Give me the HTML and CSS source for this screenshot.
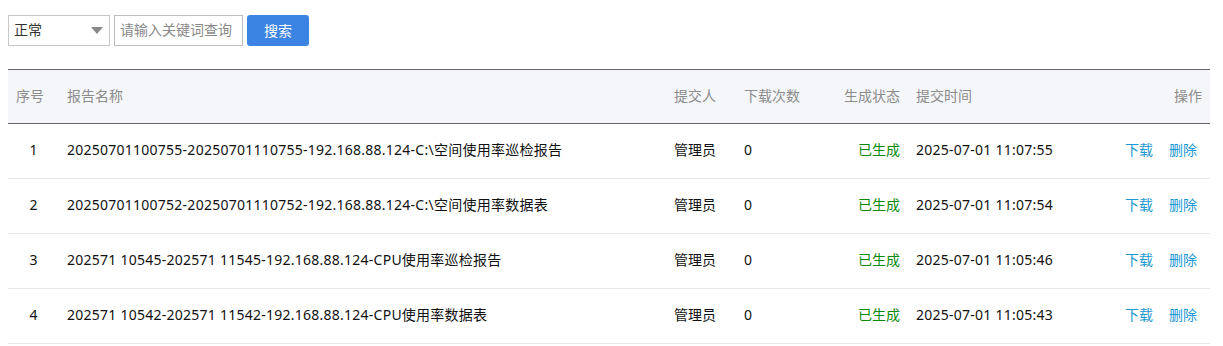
FILE: index.html
```html
<!DOCTYPE html>
<html lang="zh-CN">
<head>
<meta charset="utf-8">
<title>报告列表</title>
<link rel="stylesheet" href="styles.css">
</head>
<body>
<div class="page">
  <div class="toolbar">
    <div class="select">
      <span class="select-text">正常</span>
      <span class="select-arrow"></span>
    </div>
    <input class="search-input" type="text" placeholder="请输入关键词查询">
    <button class="search-btn">搜索</button>
  </div>

  <div class="table">
    <div class="row head">
      <div class="cell c-no">序号</div>
      <div class="cell c-name">报告名称</div>
      <div class="cell c-user">提交人</div>
      <div class="cell c-count">下载次数</div>
      <div class="cell c-status">生成状态</div>
      <div class="cell c-time">提交时间</div>
      <div class="cell c-ops">操作</div>
    </div>
    <div class="row body">
      <div class="cell c-no">1</div>
      <div class="cell c-name">20250701100755-20250701110755-192.168.88.124-C:\空间使用率巡检报告</div>
      <div class="cell c-user">管理员</div>
      <div class="cell c-count">0</div>
      <div class="cell c-status ok">已生成</div>
      <div class="cell c-time">2025-07-01 11:07:55</div>
      <div class="cell c-ops"><a class="op">下载</a><a class="op">删除</a></div>
    </div>
    <div class="row body">
      <div class="cell c-no">2</div>
      <div class="cell c-name">20250701100752-20250701110752-192.168.88.124-C:\空间使用率数据表</div>
      <div class="cell c-user">管理员</div>
      <div class="cell c-count">0</div>
      <div class="cell c-status ok">已生成</div>
      <div class="cell c-time">2025-07-01 11:07:54</div>
      <div class="cell c-ops"><a class="op">下载</a><a class="op">删除</a></div>
    </div>
    <div class="row body">
      <div class="cell c-no">3</div>
      <div class="cell c-name">202571 10545-202571 11545-192.168.88.124-CPU使用率巡检报告</div>
      <div class="cell c-user">管理员</div>
      <div class="cell c-count">0</div>
      <div class="cell c-status ok">已生成</div>
      <div class="cell c-time">2025-07-01 11:05:46</div>
      <div class="cell c-ops"><a class="op">下载</a><a class="op">删除</a></div>
    </div>
    <div class="row body">
      <div class="cell c-no">4</div>
      <div class="cell c-name">202571 10542-202571 11542-192.168.88.124-CPU使用率数据表</div>
      <div class="cell c-user">管理员</div>
      <div class="cell c-count">0</div>
      <div class="cell c-status ok">已生成</div>
      <div class="cell c-time">2025-07-01 11:05:43</div>
      <div class="cell c-ops"><a class="op">下载</a><a class="op">删除</a></div>
    </div>
  </div>
</div>
</body>
</html>
```

FILE: styles.css
```css
* { box-sizing: border-box; }
html, body {
  margin: 0;
  padding: 0;
  background: #fff;
}
body {
  font-family: "Noto Sans", "Noto Sans CJK SC", sans-serif;
  font-size: 14px;
  color: #111;
}
.page {
  padding: 15px 13px 0 8px;
}
.toolbar {
  display: flex;
  align-items: center;
  gap: 4px;
  height: 31px;
}
.select {
  width: 102px;
  height: 31px;
  border: 1px solid #c8c8c8;
  display: flex;
  align-items: center;
  justify-content: space-between;
  padding: 0 5px 2px 5px;
  background: #fff;
}
.select-text {
  font-size: 14px;
  color: #333;
  line-height: 20px;
}
.select-arrow {
  width: 0;
  height: 0;
  border-left: 6px solid transparent;
  border-right: 6px solid transparent;
  border-top: 7px solid #888;
  margin-right: 1px;
  margin-top: 2px;
}
.search-input {
  width: 129px;
  height: 31px;
  border: 1px solid #bdbdbd;
  padding: 0 5px 2px 5px;
  font-family: inherit;
  font-size: 14px;
  color: #333;
  outline: none;
}
.search-input::placeholder {
  color: #8a8a8a;
}
.search-btn {
  width: 62px;
  height: 31px;
  border: none;
  border-radius: 3px;
  background: #3c84e4;
  color: #fff;
  font-family: inherit;
  font-size: 14px;
  padding: 0 0 2px 0;
}
.table {
  margin-top: 23px;
  width: 1202px;
}
.row {
  display: grid;
  grid-template-columns: 51px 607px 70px 84px 88px 192px 110px;
  align-items: center;
}
.head {
  height: 55px;
  background: #f5f6f9;
  border-top: 1px solid #666;
  border-bottom: 1px solid #666;
  color: #8c8c8c;
}
.head .cell {
  padding-bottom: 1px;
}
.body {
  height: 55px;
  border-bottom: 1px solid #e8e8e8;
}
.cell {
  padding: 0 8px 3px 8px;
  line-height: 20px;
  white-space: nowrap;
}
.body .c-no {
  text-align: center;
}
.body .c-name,
.body .c-time {
  letter-spacing: 0.25px;
}
.c-status, .c-ops {
  text-align: right;
}
.ok {
  color: #0a8a0a;
}
.body .c-ops {
  padding-right: 13px;
  display: flex;
  justify-content: flex-end;
  gap: 16px;
}
.op {
  color: #1c98d4;
  cursor: pointer;
}
```
